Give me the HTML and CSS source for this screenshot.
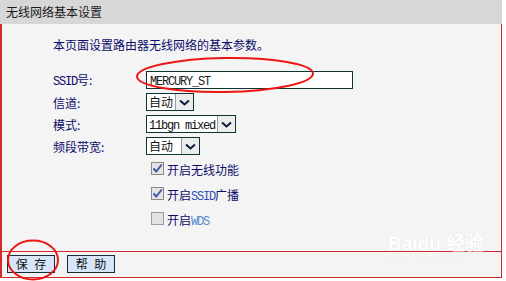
FILE: index.html
```html
<!DOCTYPE html>
<html lang="zh-CN">
<head>
    <meta charset="UTF-8">
    <meta name="viewport" content="width=device-width, initial-scale=1.0">
    <title>无线网络基本设置</title>
    <link rel="stylesheet" href="styles.css">
</head>
<body>
    <section id="mainwrapper">
        <div class="title">无线网络基本设置</div>
        <div class="box">
            <div class="content">
                <p class="desc">本页面设置路由器无线网络的基本参数。</p>
                <div class="row">
                    <span class="label"><span class="en">SSID</span>号:</span>
                    <div class="textbox"><span class="en">MERCURY_ST</span></div>
                </div>
                <div class="row">
                    <span class="label">信道:</span>
                    <div class="sel w48"><span class="val">自动</span><span class="arrow"><svg width="11" height="7" viewBox="0 0 11 7"><path d="M1 1.5 L5.5 5.5 L10 1.5" fill="none" stroke="#0a1a3a" stroke-width="2"/></svg></span></div>
                </div>
                <div class="row">
                    <span class="label">模式:</span>
                    <div class="sel w90"><span class="val"><span class="en">11bgn mixed</span></span><span class="arrow"><svg width="11" height="7" viewBox="0 0 11 7"><path d="M1 1.5 L5.5 5.5 L10 1.5" fill="none" stroke="#0a1a3a" stroke-width="2"/></svg></span></div>
                </div>
                <div class="row">
                    <span class="label">频段带宽:</span>
                    <div class="sel w54"><span class="val">自动</span><span class="arrow"><svg width="11" height="7" viewBox="0 0 11 7"><path d="M1 1.5 L5.5 5.5 L10 1.5" fill="none" stroke="#0a1a3a" stroke-width="2"/></svg></span></div>
                </div>
                <div class="check">
                    <span class="cb"><svg width="11" height="11" viewBox="0 0 11 11"><path d="M1.5 5.5 L4.2 8.5 L9.8 1.5" fill="none" stroke="#3a5ca8" stroke-width="2"/></svg></span>
                    <span>开启无线功能</span>
                </div>
                <div class="check">
                    <span class="cb"><svg width="11" height="11" viewBox="0 0 11 11"><path d="M1.5 5.5 L4.2 8.5 L9.8 1.5" fill="none" stroke="#3a5ca8" stroke-width="2"/></svg></span>
                    <span>开启<span class="en blue">SSID</span>广播</span>
                </div>
                <div class="check">
                    <span class="cb off"></span>
                    <span>开启<span class="en light">WDS</span></span>
                </div>
            </div>
            <div class="foot">
                <span class="btn">保 存</span>
                <span class="btn">帮 助</span>
            </div>
        </div>
        <div class="watermark">
            <div class="wm1">Bai<span>du</span> 经验</div>
            <div class="wm2">jingyan.baidu.com</div>
        </div>
        <svg class="marks" width="506" height="281" viewBox="0 0 506 281">
            <ellipse cx="225" cy="75" rx="88" ry="17" transform="rotate(-1 225 75)" fill="none" stroke="#ee1515" stroke-width="2"/>
            <ellipse cx="33" cy="260" rx="25" ry="19.5" fill="none" stroke="#ee1515" stroke-width="2"/>
        </svg>
    </section>
</body>
</html>
```

FILE: styles.css
```css
*{
    padding:0;
    margin:0;
    box-sizing: border-box;
}
body{
    background:#fff;
    font-family:"Noto Sans CJK SC", sans-serif;
    font-size:12px;
}
#mainwrapper{
    position:relative;
    width:506px;
    height:281px;
}
.title{
    width:502px;
    height:24px;
    line-height:24px;
    background:#d7d7d7;
    padding-left:6px;
    color:#1a1a1a;
}
.box{
    width:502px;
    background:#f4f4f4;
    border-left:2px solid #d42a2a;
    border-right:1px solid #d42a2a;
    border-bottom:1px solid #d42a2a;
}
.content{
    height:228px;
    padding:12px 0 0 51px;
    border-bottom:1px solid #d42a2a;
    color:#0c0c6a;
}
.en{
    font-family:"Liberation Mono", monospace;
    font-size:12px;
    letter-spacing:-1.2px;
}
.desc{
    height:18px;
    line-height:18px;
    margin-bottom:15px;
}
.row{
    display:flex;
    align-items:center;
    height:22px;
}
.label{
    width:93px;
}
.textbox{
    width:207px;
    height:18px;
    line-height:16px;
    border:1px solid #0e3333;
    background:#fff;
    padding-left:3px;
    color:#1a1a1a;
}
.sel{
    display:flex;
    height:18px;
    border:1px solid #0e3333;
    background:#fff;
    color:#111;
}
.w48{ width:48px; }
.w54{ width:54px; }
.w90{ width:90px; }
.sel .val{
    flex-grow:1;
    line-height:16px;
    padding-left:2px;
}
.sel .arrow{
    width:18px;
    background:#ececec;
    border-left:1px solid #9a9a9a;
    display:flex;
    justify-content:center;
    align-items:center;
}
.check{
    display:flex;
    align-items:center;
    height:25px;
    padding-left:98px;
}
.cb{
    width:13px;
    height:13px;
    border:1px solid #8a8a8a;
    background:#e4e4e4;
    margin-right:3px;
    margin-top:-2px;
    display:flex;
    justify-content:center;
    align-items:center;
}
.cb.off{
    background:#e2e2e2;
    border-color:#9c9c9c;
}
.blue{ color:#3050b0; }
.light{ color:#5a8ad0; }
.foot{
    height:25px;
    padding:3px 0 0 5px;
    display:flex;
    gap:12px;
}
.btn{
    width:48px;
    height:18px;
    line-height:16px;
    text-align:center;
    background:#d6e5f8;
    border:1px solid #123030;
    color:#111;
    letter-spacing:2px;
    padding-left:2px;
}
.watermark{
    position:absolute;
    left:388px;
    top:234px;
    color:#ffffff;
    text-shadow:0 0 1px #dadada;
    font-family:"Liberation Sans", sans-serif;
}
.wm1{
    font-size:19px;
    font-weight:bold;
    line-height:20px;
}
.wm2{
    font-size:9px;
    line-height:12px;
    padding-left:2px;
}
.marks{
    position:absolute;
    left:0;
    top:0;
    pointer-events:none;
}
```
